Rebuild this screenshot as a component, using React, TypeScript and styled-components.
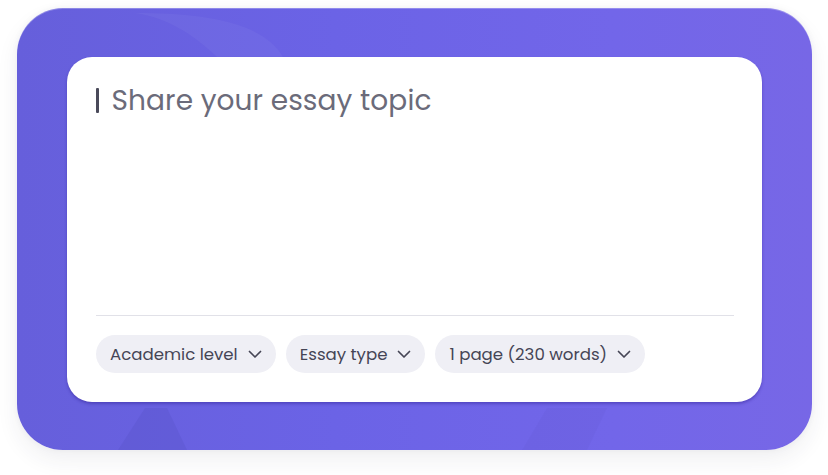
import React from "react";
import styled, { createGlobalStyle } from "styled-components";

const Global = createGlobalStyle`
  html, body { margin: 0; padding: 0; background: #ffffff; }
  body { font-family: "Poppins", "Inter", "Noto Sans", sans-serif; }
  * { box-sizing: border-box; }
`;

const Page = styled.div`
  width: 828px;
  height: 475px;
  padding: 8px 16px 25px 17px;
  display: flex;
`;

const Frame = styled.div`
  position: relative;
  flex: 1;
  border-radius: 46px;
  background: linear-gradient(90deg, #665fdb 0%, #6b63e6 40%, #7266e9 75%, #7767e6 100%);
  box-shadow: 0 10px 22px rgba(40, 40, 70, 0.07), 0 0 6px rgba(40, 40, 70, 0.05), inset 0 1px 0 rgba(255, 255, 255, 0.25);
  padding: 49px 50px 48px 50px;
  display: flex;
  overflow: hidden;
`;

const Deco = styled.svg`
  position: absolute;
  inset: 0;
  width: 100%;
  height: 100%;
  pointer-events: none;
`;

const Card = styled.div`
  position: relative;
  flex: 1;
  background: #ffffff;
  border-radius: 25px;
  box-shadow: 0 2px 3px rgba(50, 35, 150, 0.45);
  padding: 30px 28px 29px 29px;
  display: flex;
  flex-direction: column;
`;

const Prompt = styled.div`
  flex: 1;
  display: flex;
  align-items: flex-start;
  gap: 13px;
  font-size: 28px;
  line-height: 28px;
  color: #6b6b7a;
  letter-spacing: 0.1px;
`;

const Caret = styled.span`
  display: inline-block;
  width: 2.5px;
  height: 25px;
  margin-top: 1px;
  background: #4a4a5a;
  border-radius: 1px;
`;

const Divider = styled.div`
  height: 1px;
  background: #e1e1e8;
`;

const Chips = styled.div`
  display: flex;
  gap: 10px;
  margin-top: 19px;
`;

const Chip = styled.button`
  height: 38px;
  border: none;
  border-radius: 19px;
  background: #efeff5;
  color: #454555;
  font-family: inherit;
  font-size: 16.6px;
  display: flex;
  align-items: center;
  gap: 10px;
  padding: 0 14px 0 14px;
  cursor: pointer;
`;

const Chevron = () => (
  <svg width="14" height="14" viewBox="0 0 14 14" fill="none">
    <path d="M1.5 4.5 L7 10 L12.5 4.5" stroke="#454555" strokeWidth="1.7" strokeLinecap="round" strokeLinejoin="round" />
  </svg>
);

export default function App() {
  return (
    <>
      <Global />
      <Page>
        <Frame>
          <Deco viewBox="0 0 795 442" preserveAspectRatio="none">
            <path d="M118 5 C180 5 245 12 266 49 L200 49 C175 25 150 10 118 5 Z" fill="#ffffff" opacity="0.04" />
            <path d="M101 442 L128 400 L150 400 L170 442 Z" fill="#5a52c8" opacity="0.35" />
            <path d="M505 442 L530 400 L590 400 L570 442 Z" fill="#5a52c8" opacity="0.12" />
          </Deco>
          <Card>
            <Prompt>
              <Caret />
              <span>Share your essay topic</span>
            </Prompt>
            <Divider />
            <Chips>
              <Chip>Academic level <Chevron /></Chip>
              <Chip>Essay type <Chevron /></Chip>
              <Chip>1 page (230 words) <Chevron /></Chip>
            </Chips>
          </Card>
        </Frame>
      </Page>
    </>
  );
}
